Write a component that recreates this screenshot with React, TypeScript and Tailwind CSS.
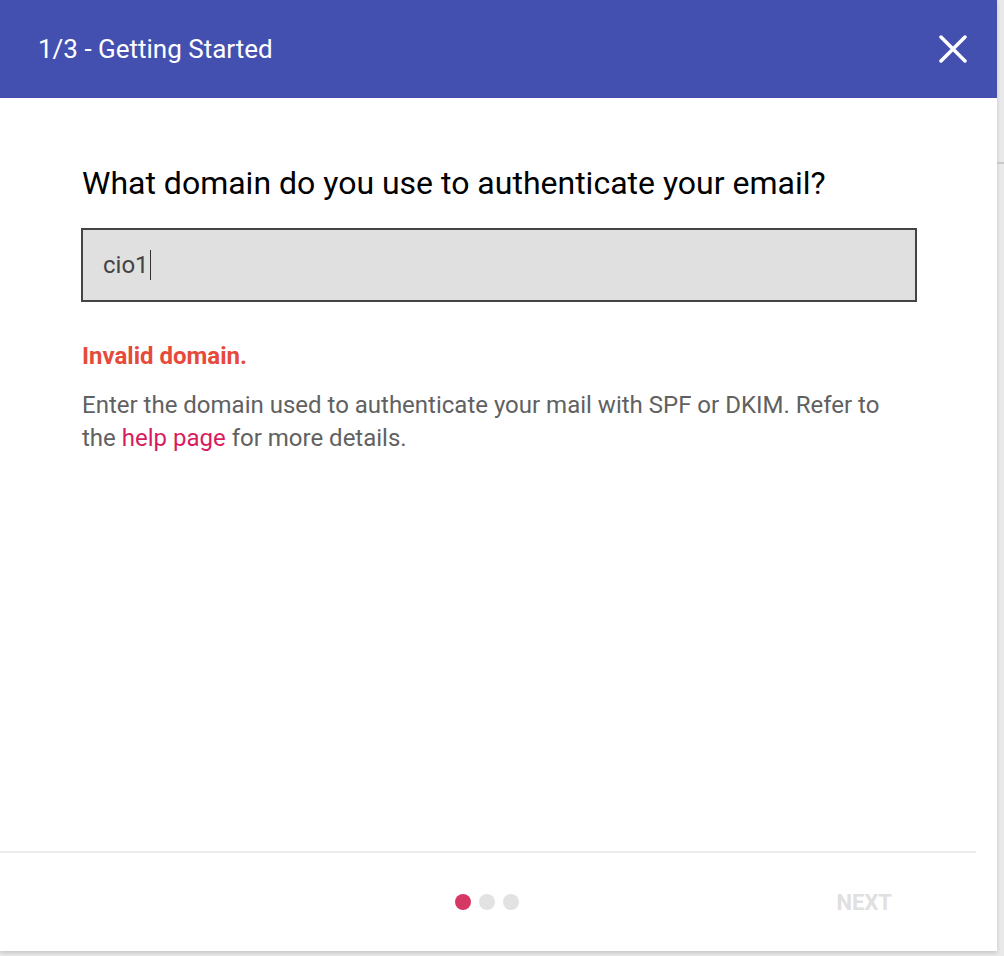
import React from "react";

const font = { fontFamily: "Roboto, 'Liberation Sans', sans-serif" };

const Dots = ({ active }: { active: number }) => (
  <div className="flex items-center gap-2">
    {[0, 1, 2].map((i) => (
      <span
        key={i}
        className={
          i === active
            ? "w-4 h-4 rounded-full bg-[#d63864]"
            : "w-4 h-4 rounded-full bg-[#e2e2e2]"
        }
      />
    ))}
  </div>
);

const App = () => {
  return (
    <div className="flex w-full h-[956px] bg-[#e9e9e9] overflow-hidden" style={font}>
      <div className="flex flex-col w-[997px] h-[951px] bg-white shadow-[0_2px_4px_rgba(0,0,0,0.15)]">
        <header className="flex items-center justify-between h-[98px] shrink-0 bg-[#4450b0] pl-[38px] pr-[30px]">
          <h1 className="text-[26px] text-white">1/3 - Getting Started</h1>
          <button className="text-white">
            <svg width="28" height="28" viewBox="0 0 28 28">
              <path d="M2 2 L26 26 M26 2 L2 26" stroke="white" strokeWidth="3.5" strokeLinecap="round" />
            </svg>
          </button>
        </header>

        <main className="flex-1 pl-[81px] pr-[80px] pt-[66px]">
          <h2 className="text-[32px] leading-[38px] text-black pl-[1px]">
            What domain do you use to authenticate your email?
          </h2>
          <div className="mt-[26px] h-[74px] border-2 border-[#444] bg-[#e0e0e0] flex items-center px-5">
            <span className="text-[24px] text-[#444]">cio1</span>
            <span className="w-[1.5px] h-[30px] bg-[#333] ml-[1px]" />
          </div>
          <p className="mt-[40px] pl-[1px] text-[24px] leading-[28px] font-bold text-[#e64a3a]">
            Invalid domain.
          </p>
          <p className="mt-[19px] pl-[1px] max-w-[815px] text-[24px] leading-[33px] text-[#616161]">
            Enter the domain used to authenticate your mail with SPF or DKIM. Refer to the{" "}
            <a className="text-[#d81b60]">help page</a> for more details.
          </p>
        </main>

        <div className="h-[2px] bg-[#ececec] mr-[21px]" />
        <footer className="flex items-center h-[98px] shrink-0 pl-[455px] pr-[105px]">
          <Dots active={0} />
          <span className="ml-auto text-[22px] font-bold text-[#e0e0e0]">NEXT</span>
        </footer>
      </div>
      <div className="flex-1 flex flex-col">
        <div className="h-[162px]" />
        <div className="h-[2px] bg-[#c9c9c9]" />
      </div>
    </div>
  );
};

export default App;
